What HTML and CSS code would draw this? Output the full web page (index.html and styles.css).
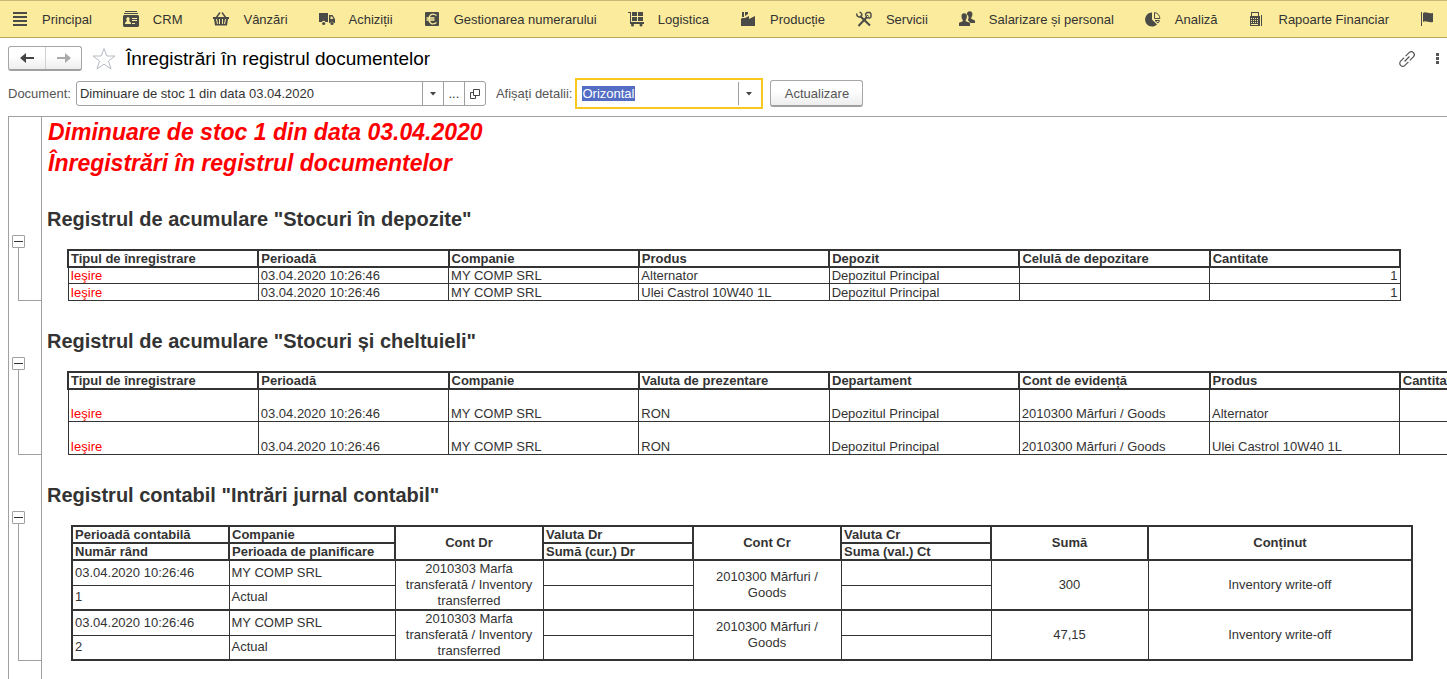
FILE: index.html
```
<!DOCTYPE html>
<html lang="ro">
<head>
    <meta charset="utf-8">
    <title>Înregistrări în registrul documentelor</title>
    <link rel="stylesheet" href="styles.css">
</head>
<body>
<nav class="sections">
    <a href="#" class="section-link">
        <svg class="icon" viewBox="0 0 16 16"><path d="M1 1h14v2H1zM1 5h14v2H1zM1 9h14v2H1zM1 13h14v2H1z"/></svg>
        Principal
    </a>
    <a href="#" class="section-link">
        <svg class="icon" viewBox="0 0 16 16"><path d="M2 0h12v1H2zM1 2h14v1H1z"/><path fill-rule="evenodd" d="M1 4h14l1 1v10l-1 1H1l-1-1V5zM5 6a2 2 0 0 0-1 3.500L2 12v1h6v-1L6 9.500A2 2 0 0 0 5 6zM9 7v1h5V7zM9 9v1h5V9zM9 12v1h3v-1z"/></svg>
        CRM
    </a>
    <a href="#" class="section-link">
        <svg class="icon" viewBox="0 0 16 16"><path d="M3 7l4-5.500M13 7L9 1.500" fill="none" stroke="#4a4a46" stroke-width="1.400"/><path fill-rule="evenodd" d="M0 6h16v2h-1l-1 6.500H2L1 8H0zM3 8l1 5h1L4 8zM6 8v5h1V8zM9 8v5h1V8zM12 8l-1 5h1l1-5z"/></svg>
        Vânzări
    </a>
    <a href="#" class="section-link">
        <svg class="icon" viewBox="0 0 16 16"><path d="M0 2h9v9H6.500a2 2 0 0 0-3.600 0H0z"/><circle cx="4.700" cy="12.500" r="1.600"/><path fill-rule="evenodd" d="M10 4h3.500L16 8v4h-1.200a2 2 0 0 0-3.600 0H10zM11.500 5.500V8H14.500L13 5.500z"/><circle cx="13" cy="12.500" r="1.600"/></svg>
        Achiziții
    </a>
    <a href="#" class="section-link">
        <svg class="icon" viewBox="0 0 16 16"><rect x="1" y="1" width="14" height="14" rx="1"/><path d="M12.500 4.500C7.500 1 5 5 5 8s2.500 7 7.500 3.500M2.500 7h8M2.500 9h8" fill="none" stroke="#fbeb9d" stroke-width="1.400"/></svg>
        Gestionarea numerarului
    </a>
    <a href="#" class="section-link">
        <svg class="icon" viewBox="0 0 16 16"><path d="M0 1h3v10h13v2H2V2H0zM4 1h5v4H4zM10 1h5v4h-5zM4 6h5v4H4zM10 6h5v4h-5z"/><circle cx="4.500" cy="14" r="1.500"/><circle cx="13" cy="14" r="1.500"/></svg>
        Logistica
    </a>
    <a href="#" class="section-link">
        <svg class="icon" viewBox="0 0 16 16"><path d="M1 15V8l1-1h3l4-2v3l6-3v10zM2 1h2v5H2zM5 1h3v2L5 5z"/></svg>
        Producție
    </a>
    <a href="#" class="section-link">
        <svg class="icon" viewBox="0 0 16 16"><path d="M4 5l10 9.500" fill="none" stroke="#4a4a46" stroke-width="2"/><path d="M11 6l-8.500 9" fill="none" stroke="#4a4a46" stroke-width="2"/><path d="M1 2.500a2.600 2.600 0 0 0 4.500 2.500A2.500 2.500 0 0 0 3.500 1.200M9.500 3L11 1.500h3l1 1.500v3l-1.500 1.200-3-.7z" fill="none" stroke="#4a4a46" stroke-width="1.400"/><path d="M11 4l2 1.500"  stroke="#4a4a46"/></svg>
        Servicii
    </a>
    <a href="#" class="section-link">
        <svg class="icon" viewBox="0 0 16 16"><path d="M8 3a2.700 2.700 0 0 1 5.400 0c0 2-.6 3-1.200 3.700v1.100L16 9.600V12h-4.500L8.800 9C10 7.500 10 5 8 3.500z"/><path d="M2.500 5a2.700 2.700 0 0 1 5.400 0c0 2-.5 3.200-1.200 4v1.200l4.300 1.600V15H0v-3.200L3.800 10.200V9C3 8.200 2.500 7 2.500 5z"/></svg>
        Salarizare și personal
    </a>
    <a href="#" class="section-link">
        <svg class="icon" viewBox="0 0 16 16"><path d="M7 1.500V8.500l5 5A7 7 0 1 1 7 1.500z"/><path d="M9.500 1.600v5.900h5.400A6 6 0 0 0 9.500 1.600zM10 9.500h4.500a6 6 0 0 1-1.500 2.500z" fill="none" stroke="#4a4a46"/></svg>
        Analiză
    </a>
    <a href="#" class="section-link">
        <svg class="icon" viewBox="0 0 16 16"><path fill-rule="evenodd" d="M2 1h8v4h1v10H1V5h1zM3 2v3h6V2zM2 7v1h1V7zM4 7v1h1V7zM6 7v1h1V7zM8 7v1h1V7zM2 9v1h1V9zM4 9v1h1V9zM6 9v1h1V9zM8 9v1h1V9zM2 11v1h1v-1zM4 11v1h1v-1zM6 11v1h1v-1zM8 11v1h1v-1zM2 13v1h7v-1zM12 4h1v11h-1z"/></svg>
        Rapoarte Financiar
    </a>
    <a href="#" class="section-link" aria-label="Companie">
        <svg class="icon" viewBox="0 0 16 16"><path d="M1 1h1v14H1zM3 2c3-2 5 1 10 0v9c-5 1-7-2-10 0z"/></svg>
    </a>
</nav>

<main class="page">
    <header class="page-header">
        <div class="history">
            <button type="button" class="history-button" aria-label="Înapoi">
                <svg class="arrow" viewBox="0 0 16 12"><path d="M7 1L1 6l6 5V7h8V5H7z" fill="#444"/></svg>
            </button>
            <button type="button" class="history-button" aria-label="Înainte" disabled>
                <svg class="arrow" viewBox="0 0 16 12"><path d="M9 1l6 5-6 5V7H1V5h8z" fill="#aaa"/></svg>
            </button>
        </div>
        <button type="button" class="plain-button" aria-label="Favorite">
            <svg class="star" viewBox="0 0 24 24"><path d="M12 1.500l2.800 7.500H23l-6.500 5 2.500 8-7-4.800L5 22l2.500-8L1 9h8.200z" fill="none" stroke="#b5bbc4"/></svg>
        </button>
        <h1 class="page-title">Înregistrări în registrul documentelor</h1>
        <div class="page-tools">
            <button type="button" class="plain-button" aria-label="Link">
                <svg class="link" viewBox="0 0 16 16"><g transform="rotate(-45 8 8)"><path d="M7 5H2a3 3 0 0 0 0 6h5M9 5h5a3 3 0 0 1 0 6H9M4.500 8h7" fill="none" stroke="#555" stroke-width="1.200"/></g></svg>
            </button>
            <button type="button" class="plain-button" aria-label="Mai mult">
                <svg class="dots" viewBox="0 0 4 12"><path d="M1 0h3v3H1zM1 4h3v3H1zM1 8h3v3H1z" fill="#555"/></svg>
            </button>
        </div>
    </header>

    <form class="filters">
        <label for="document">Document:</label>
        <div class="field document-field">
            <input type="text" id="document" class="field-input" value="Diminuare de stoc 1 din data 03.04.2020">
            <button type="button" class="field-button" aria-label="Listă"><svg class="caret" viewBox="0 0 6 4"><path d="M0 0h6L3 3.500z" fill="#444"/></svg></button>
            <button type="button" class="field-button">...</button>
            <button type="button" class="field-button" aria-label="Deschide"><svg class="open" viewBox="0 0 10 10"><path d="M3.500.5h6v6h-6zM3.500 3.500h-3v6h5v-3" fill="none" stroke="#444"/></svg></button>
        </div>
        <label for="details" class="details-label">Afișați detalii:</label>
        <div class="field details-field">
            <input type="text" id="details" class="field-input" value="Orizontal">
            <button type="button" class="field-button" aria-label="Listă"><svg class="caret" viewBox="0 0 6 4"><path d="M0 0h6L3 3.500z" fill="#444"/></svg></button>
        </div>
        <button type="button" class="refresh">Actualizare</button>
    </form>

    <div class="sheet">
        <section class="block">
            <div class="gutter"></div>
            <div class="title">
                <p>Diminuare de stoc 1 din data 03.04.2020</p>
                <p>Înregistrări în registrul documentelor</p>
            </div>
        </section>

        <section class="block">
            <div class="gutter register-gutter">
                <button type="button" class="toggle" aria-label="Restrânge"></button>
                <div class="bracket"></div>
            </div>
            <div class="register">
                <h2>Registrul de acumulare "Stocuri în depozite"</h2>
                <table class="records stock">
                    <thead>
                    <tr>
                        <th>Tipul de înregistrare</th>
                        <th>Perioadă</th>
                        <th>Companie</th>
                        <th>Produs</th>
                        <th>Depozit</th>
                        <th>Celulă de depozitare</th>
                        <th>Cantitate</th>
                    </tr>
                    </thead>
                    <tbody>
                    <tr>
                        <td class="expense">Ieşire</td>
                        <td>03.04.2020 10:26:46</td>
                        <td>MY COMP SRL</td>
                        <td>Alternator</td>
                        <td>Depozitul Principal</td>
                        <td></td>
                        <td class="number">1</td>
                    </tr>
                    <tr>
                        <td class="expense">Ieşire</td>
                        <td>03.04.2020 10:26:46</td>
                        <td>MY COMP SRL</td>
                        <td>Ulei Castrol 10W40 1L</td>
                        <td>Depozitul Principal</td>
                        <td></td>
                        <td class="number">1</td>
                    </tr>
                    </tbody>
                </table>
            </div>
        </section>

        <section class="block">
            <div class="gutter register-gutter">
                <button type="button" class="toggle" aria-label="Restrânge"></button>
                <div class="bracket"></div>
            </div>
            <div class="register">
                <h2>Registrul de acumulare "Stocuri și cheltuieli"</h2>
                <table class="records costs">
                    <thead>
                    <tr>
                        <th>Tipul de înregistrare</th>
                        <th>Perioadă</th>
                        <th>Companie</th>
                        <th>Valuta de prezentare</th>
                        <th>Departament</th>
                        <th>Cont de evidență</th>
                        <th>Produs</th>
                        <th>Cantitate</th>
                    </tr>
                    </thead>
                    <tbody>
                    <tr>
                        <td class="expense">Ieşire</td>
                        <td>03.04.2020 10:26:46</td>
                        <td>MY COMP SRL</td>
                        <td>RON</td>
                        <td>Depozitul Principal</td>
                        <td>2010300 Mărfuri / Goods</td>
                        <td>Alternator</td>
                        <td></td>
                    </tr>
                    <tr>
                        <td class="expense">Ieşire</td>
                        <td>03.04.2020 10:26:46</td>
                        <td>MY COMP SRL</td>
                        <td>RON</td>
                        <td>Depozitul Principal</td>
                        <td>2010300 Mărfuri / Goods</td>
                        <td>Ulei Castrol 10W40 1L</td>
                        <td></td>
                    </tr>
                    </tbody>
                </table>
            </div>
        </section>

        <section class="block">
            <div class="gutter register-gutter">
                <button type="button" class="toggle" aria-label="Restrânge"></button>
                <div class="bracket"></div>
            </div>
            <div class="register">
                <h2>Registrul contabil "Intrări jurnal contabil"</h2>
                <table class="records journal">
                    <colgroup>
                        <col class="col-period">
                        <col class="col-company">
                        <col class="col-account">
                        <col class="col-currency">
                        <col class="col-account">
                        <col class="col-currency">
                        <col class="col-period">
                        <col class="col-content">
                    </colgroup>
                    <thead>
                    <tr>
                        <th>Perioadă contabilă</th>
                        <th>Companie</th>
                        <th rowspan="2" class="center">Cont Dr</th>
                        <th>Valuta Dr</th>
                        <th rowspan="2" class="center">Cont Cr</th>
                        <th>Valuta Cr</th>
                        <th rowspan="2" class="center">Sumă</th>
                        <th rowspan="2" class="center">Conținut</th>
                    </tr>
                    <tr>
                        <th>Număr rând</th>
                        <th>Perioada de planificare</th>
                        <th>Sumă (cur.) Dr</th>
                        <th>Suma (val.) Ct</th>
                    </tr>
                    </thead>
                    <tbody>
                    <tr>
                        <td>03.04.2020 10:26:46</td>
                        <td>MY COMP SRL</td>
                        <td rowspan="2" class="center">2010303 Marfa transferată / Inventory transferred</td>
                        <td></td>
                        <td rowspan="2" class="center">2010300 Mărfuri / Goods</td>
                        <td></td>
                        <td rowspan="2" class="center">300</td>
                        <td rowspan="2" class="center">Inventory write-off</td>
                    </tr>
                    <tr>
                        <td>1</td>
                        <td>Actual</td>
                        <td></td>
                        <td></td>
                    </tr>
                    </tbody>
                    <tbody>
                    <tr>
                        <td>03.04.2020 10:26:46</td>
                        <td>MY COMP SRL</td>
                        <td rowspan="2" class="center">2010303 Marfa transferată / Inventory transferred</td>
                        <td></td>
                        <td rowspan="2" class="center">2010300 Mărfuri / Goods</td>
                        <td></td>
                        <td rowspan="2" class="center">47,15</td>
                        <td rowspan="2" class="center">Inventory write-off</td>
                    </tr>
                    <tr>
                        <td>2</td>
                        <td>Actual</td>
                        <td></td>
                        <td></td>
                    </tr>
                    </tbody>
                </table>
            </div>
        </section>
    </div>
</main>

<script>
    const details = document.getElementById('details');
    details.focus();
    details.select();
</script>
</body>
</html>
```
FILE: styles.css
```
* {
    box-sizing: border-box;
}

body {
    margin: 0;
    height: 100vh;
    display: flex;
    flex-direction: column;
    overflow: hidden;
    background-color: #fff;
    color: #333;
    font-family: "Liberation Sans", Arial, sans-serif;
    font-size: 13px;
}

button, input {
    font: inherit;
    color: inherit;
    margin: 0;
    padding: 0;
}

.sections {
    display: flex;
    flex: none;
    gap: 31px;
    height: 38px;
    padding-left: 12px;
    border-top: 1px solid #c9b873;
    border-bottom: 1px solid #b9a95f;
    background-color: #fbeb9d;
    overflow: hidden;
}

.section-link {
    display: flex;
    flex: none;
    align-items: center;
    gap: 14px;
    color: #333;
    text-decoration: none;
    white-space: nowrap;
}

.icon {
    width: 16px;
    height: 16px;
    fill: #4a4a46;
}

.page {
    display: flex;
    flex: 1;
    flex-direction: column;
    min-height: 0;
    padding: 8px 0 0 8px;
}

.page-header {
    display: flex;
    flex: none;
    align-items: center;
    height: 25px;
    padding-right: 8px;
}

.history {
    display: flex;
    height: 25px;
    margin-right: 10px;
    border: 1px solid #a6a6a6;
    border-bottom: 2px solid #a0a0a0;
    border-radius: 3px;
    background: linear-gradient(#fff 40%, #ededed);
}

.history-button {
    display: flex;
    align-items: center;
    justify-content: center;
    width: 36px;
    border: 0;
    background: none;
}

.history-button + .history-button {
    border-left: 1px solid #d0d0d0;
}

.arrow {
    width: 16px;
    height: 12px;
}

.plain-button {
    display: flex;
    border: 0;
    background: none;
}

.star {
    width: 24px;
    height: 24px;
}

.page-title {
    margin: 0 0 0 10px;
    color: #000;
    font-size: 19px;
    font-weight: normal;
    line-height: 24px;
}

.page-tools {
    display: flex;
    align-items: center;
    gap: 20px;
    margin-left: auto;
}

.link {
    width: 16px;
    height: 16px;
    overflow: visible;
}

.dots {
    width: 4px;
    height: 12px;
}

.filters {
    display: flex;
    flex: none;
    align-items: center;
    height: 31px;
    margin: 7px 0;
    color: #555;
}

.field {
    display: flex;
    background-color: #fff;
    color: #333;
}

.field-input {
    flex: 1;
    min-width: 0;
    padding-left: 3px;
    border: 0;
    outline: 0;
    background: none;
}

.field-input::selection {
    background-color: rgba(80, 107, 194, 0.99);
    color: #fff;
}

.field-button {
    display: flex;
    align-items: center;
    justify-content: center;
    width: 21px;
    border: 0;
    border-left: 1px solid #a0a0a0;
    background: none;
}

.document-field {
    width: 410px;
    height: 25px;
    margin-left: 5px;
    border: 1px solid #a0a0a0;
    border-radius: 3px;
}

.details-label {
    margin-left: 10px;
}

.details-field {
    width: 188px;
    height: 31px;
    margin-left: 3px;
    padding: 2px;
    border: 2px solid #f8c91c;
}

.caret {
    width: 6px;
    height: 4px;
}

.open {
    width: 10px;
    height: 10px;
}

.refresh {
    width: 93px;
    height: 27px;
    margin-left: 7px;
    border: 1px solid #a6a6a6;
    border-bottom: 2px solid #a0a0a0;
    border-radius: 3px;
    background: linear-gradient(#fff 40%, #ededed);
}

/* spreadsheet with the grouping gutter on the left */
.sheet {
    flex: 1;
    min-height: 0;
    border-top: 1px solid #a0a0a0;
    border-left: 1px solid #a0a0a0;
    overflow: hidden;
}

.block {
    display: grid;
    grid-template-columns: 33px 1fr;
}

.gutter {
    display: flex;
    flex-direction: column;
    border-right: 1px solid #a0a0a0;
}

.register-gutter {
    padding: 32px 0 24px 3px;
}

.toggle {
    display: flex;
    align-items: center;
    justify-content: center;
    width: 13px;
    height: 13px;
    border: 1px solid #a0a0a0;
    border-radius: 1px;
    background-color: #fff;
}

.toggle::before {
    content: "";
    width: 9px;
    height: 1px;
    background-color: #333;
}

.bracket {
    flex: 1;
    margin-left: 6px;
    border-left: 1px solid #a0a0a0;
    border-bottom: 1px solid #a0a0a0;
}

.title {
    padding: 0 0 24px 6px;
    color: #f00;
    font-size: 23px;
    font-style: italic;
    font-weight: bold;
    line-height: 31px;
}

.title p {
    margin: 0;
}

.register {
    min-width: 0;
    padding-bottom: 24px;
}

.register h2 {
    margin: 0 0 14px 5px;
    font-size: 20px;
    line-height: 32px;
}

.records {
    table-layout: fixed;
    border-collapse: collapse;
    line-height: 14px;
}

.records th,
.records td {
    height: 17px;
    padding: 0 2px;
    border: 1px solid #333;
    text-align: left;
    vertical-align: bottom;
}

.records th {
    border-width: 2px;
}

.records .center {
    padding: 0 8px;
    text-align: center;
    vertical-align: middle;
}

.records .number {
    text-align: right;
}

.records .expense {
    color: #f00;
}

.stock,
.costs {
    margin-left: 25px;
}

.stock {
    width: 1334px;
}

.stock tbody tr:first-child td {
    height: 16px;
}

.costs {
    width: 1524px;
}

.costs td {
    height: 33px;
}

.journal {
    width: 1342px;
    margin-left: 29px;
    border: 2px solid #333;
}

.journal td {
    height: 25px;
    line-height: 16px;
    vertical-align: middle;
}

.journal tbody {
    border-bottom: 2px solid #333;
}

.col-period {
    width: 157px;
}

.col-company {
    width: 166px;
}

.col-account {
    width: 148px;
}

.col-currency {
    width: 150px;
}
```
